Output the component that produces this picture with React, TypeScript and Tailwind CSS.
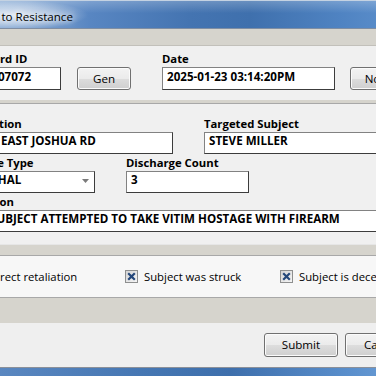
import React from 'react';

// Windows 7 style dialog, cropped by the viewport on both sides

function TextBox({ value, className = '' }: { value: string; className?: string }) {
  return (
    <div
      className={`h-[22px] overflow-hidden whitespace-nowrap border border-[#828282] border-r-[#3c3c3c] border-b-[#3c3c3c] bg-white pl-[4px] text-[11.6px] font-bold text-black ${className}`}
    >
      {value}
    </div>
  );
}

function Field({ label, width, children }: { label: string; width: string; children: React.ReactNode }) {
  return (
    <div className={`flex shrink-0 flex-col ${width}`}>
      <span className="whitespace-nowrap font-bold text-black">{label}</span>
      {children}
    </div>
  );
}

function WinButton({ label, className = '' }: { label: string; className?: string }) {
  return (
    <button
      className={`flex shrink-0 items-center justify-center rounded-[3px] border border-[#707070] bg-[linear-gradient(180deg,#f3f3f3_0%,#ebebeb_50%,#dddddd_51%,#cfcfcf_100%)] text-[11.6px] text-black shadow-[inset_0_0_0_1px_#fbfbfb] ${className}`}
    >
      {label}
    </button>
  );
}

function Check({ label }: { label: string }) {
  return (
    <div className="flex w-[155px] shrink-0 items-center gap-[6px] whitespace-nowrap">
      <span className="flex h-[13px] w-[13px] items-center justify-center border border-[#8e8f8f] bg-[linear-gradient(135deg,#d4d4d4,#f6f6f6)]">
        <svg width="9" height="9" viewBox="0 0 9 9">
          <path d="M1.2 1.2 L7.8 7.8 M7.8 1.2 L1.2 7.8" stroke="#24477a" strokeWidth="2.2" />
        </svg>
      </span>
      <span className="text-black">{label}</span>
    </div>
  );
}

export default function App() {
  return (
    <div className="h-[376px] w-[376px] overflow-hidden bg-[#d6d4cd] font-['Open_Sans','Noto_Sans',sans-serif] text-[11.3px] leading-4">
      <div className="ml-[-60px] flex w-[500px] flex-col">
        {/* title bar */}
        <div className="flex h-[29px] items-start border-t border-t-[#c4d2e2] border-b border-b-[#7f8ea3] bg-[radial-gradient(ellipse_78px_15px_at_70px_14px,rgba(255,255,255,0.75)_0%,rgba(255,255,255,0.35)_60%,rgba(255,255,255,0)_100%),linear-gradient(180deg,rgba(255,255,255,0.22)_0%,rgba(255,255,255,0)_45%),linear-gradient(90deg,#9ab8dc_0%,#7fa3d0_18%,#5886c2_30%,#4474b1_50%,#3f70ad_62%,#4f83c2_80%,#6799d3_100%)] pl-[6px] pt-[8px]">
          <span className="whitespace-nowrap text-[11.6px] text-black [text-shadow:0_0_6px_#fff,0_0_10px_#fff]">
            Response to Resistance
          </span>
        </div>

        {/* empty tool strip */}
        <div className="h-[17px] border-b border-b-[#c2c0ba] bg-[#d6d4cd]" />

        {/* record / date */}
        <div className="flex h-[54px] items-start bg-[#f0f0f0] pl-[33px] pt-[5px]">
          <Field label="Record ID" width="w-[88px]">
            <TextBox value="25007072" className="h-[23px] pt-[1px]" />
          </Field>
          <WinButton label="Gen" className="ml-[16px] mt-[16px] h-[23px] w-[54px]" />
          <Field label="Date" width="ml-[31px] w-[173px]">
            <TextBox value="2025-01-23 03:14:20PM" className="h-[23px] pt-[1px]" />
          </Field>
          <WinButton label="Now" className="ml-[15px] mt-[16px] h-[23px] w-[54px]" />
        </div>

        <div className="h-[4px] border-b border-b-[#a8a8a8] bg-[#d6d4cd]" />

        {/* incident details */}
        <div className="flex h-[140px] flex-col gap-[1px] bg-[#f0f0f0] pl-[33px] pt-[12px]">
          <div className="flex gap-[31px]">
            <Field label="Location" width="w-[200px]">
              <TextBox value="123 EAST JOSHUA RD" />
            </Field>
            <Field label="Targeted Subject" width="w-[200px]">
              <TextBox value="STEVE MILLER" />
            </Field>
          </div>
          <div className="flex gap-[31px]">
            <Field label="Force Type" width="w-[122px]">
              <div className="flex h-[22px] items-start justify-between border border-[#828282] border-r-[#3c3c3c] border-b-[#3c3c3c] bg-white pl-[4px] pr-[5px] text-[11.6px] font-bold text-black">
                <span>LETHAL</span>
                <svg width="7" height="4" viewBox="0 0 7 4" className="mt-[7px]">
                  <path d="M0 0 H7 L3.5 4 Z" fill="#7a7a7a" />
                </svg>
              </div>
            </Field>
            <Field label="Discharge Count" width="w-[123px]">
              <TextBox value="3" />
            </Field>
          </div>
          <Field label="Reason" width="w-[431px]">
            <TextBox value="SUBJECT ATTEMPTED TO TAKE VITIM HOSTAGE WITH FIREARM" className="pl-[16px]" />
          </Field>
        </div>

        <div className="h-[12px] border-t border-t-[#e6e6e6] border-b border-b-[#a8a8a8] bg-[#d6d4cd]" />

        {/* flags */}
        <div className="flex h-[41px] items-center bg-[#f7f7f7] pl-[30px]">
          <Check label="Direct retaliation" />
          <Check label="Subject was struck" />
          <Check label="Subject is deceased" />
        </div>

        <div className="h-[26px] border-t border-t-[#a8a8a8] bg-[#d6d4cd]" />

        {/* actions */}
        <div className="flex h-[44px] justify-end gap-[7px] bg-[#efefef] pr-[21px] pt-[10px]">
          <WinButton label="Submit" className="h-[24px] w-[74px]" />
          <WinButton label="Cancel" className="h-[24px] w-[74px]" />
        </div>

        {/* window frame */}
        <div className="h-[9px] border-t border-t-[#8b9099] bg-[linear-gradient(90deg,#7099cc_0%,#5a87c0_12%,#4677b3_40%,#3e6fac_58%,#5a8fcc_82%,#78a8dc_100%)]" />
      </div>
    </div>
  );
}
